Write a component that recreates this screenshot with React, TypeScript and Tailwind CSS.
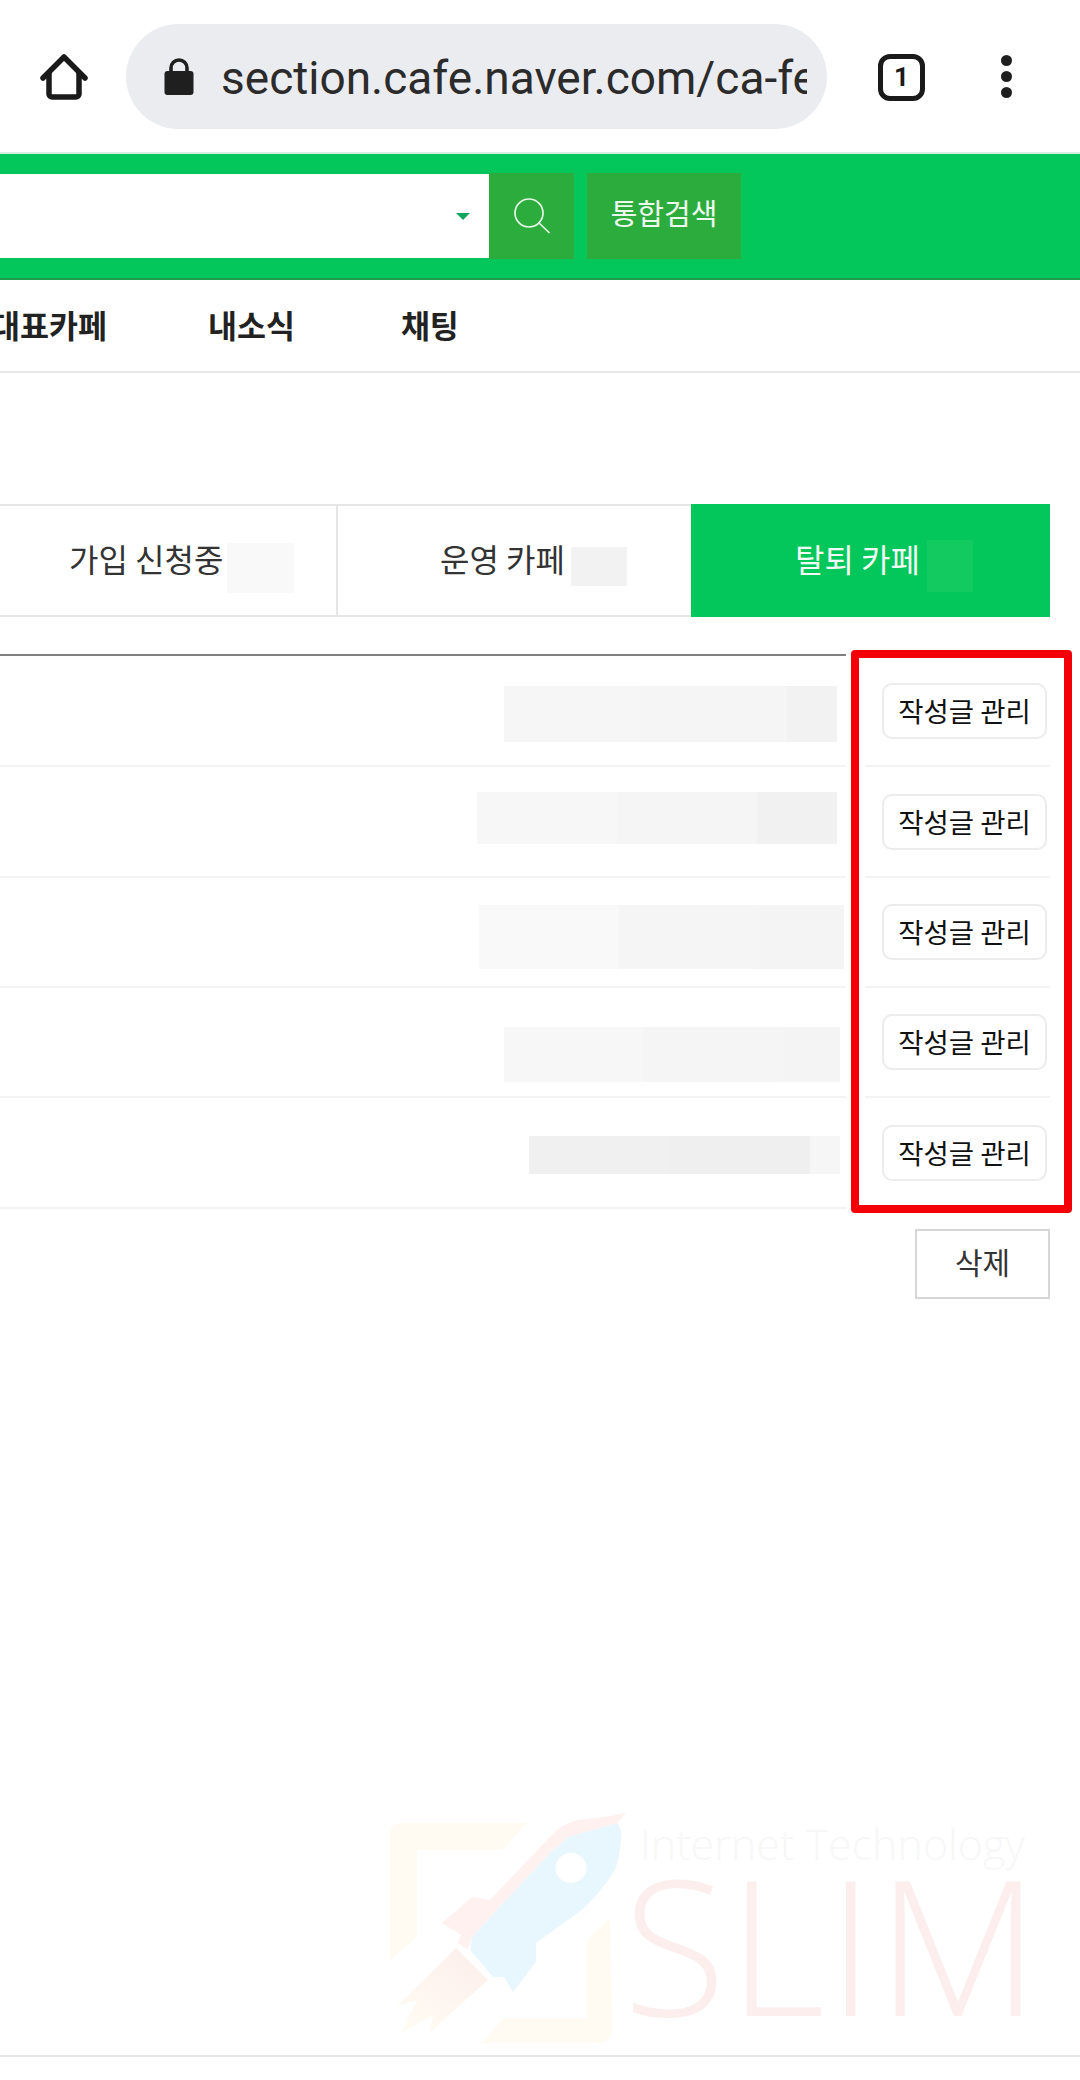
// App.tsx

type Row = {
  h: string
  blur: React.ReactNode
}

const rows: Row[] = [
  {
    h: 'h-[111px]',
    blur: (
      <div className="flex h-[56px] mt-[30px] mr-[9px]">
        <div className="w-[135px] bg-[#f6f6f6]" />
        <div className="w-[148px] bg-[#f5f5f5]" />
        <div className="w-[50px] bg-[#f2f2f2]" />
      </div>
    ),
  },
  {
    h: 'h-[111px]',
    blur: (
      <div className="flex h-[52px] mt-[25px] mr-[9px]">
        <div className="w-[140px] bg-[#f7f7f7]" />
        <div className="w-[140px] bg-[#f5f5f5]" />
        <div className="w-[80px] bg-[#f1f1f1]" />
      </div>
    ),
  },
  {
    h: 'h-[110px]',
    blur: (
      <div className="flex h-[64px] mt-[27px] mr-[2px]">
        <div className="w-[140px] bg-[#f9f9f9]" />
        <div className="w-[140px] bg-[#f5f5f5]" />
        <div className="w-[85px] bg-[#f4f4f4]" />
      </div>
    ),
  },
  {
    h: 'h-[110px]',
    blur: (
      <div className="flex h-[55px] mt-[39px] mr-[6px]">
        <div className="w-[139px] bg-[#f7f7f7]" />
        <div className="w-[140px] bg-[#f5f5f5]" />
        <div className="w-[57px] bg-[#f4f4f4]" />
      </div>
    ),
  },
  {
    h: 'h-[111px]',
    blur: (
      <div className="flex h-[38px] mt-[38px] mr-[6px]">
        <div className="w-[140px] bg-[#f0f0f0]" />
        <div className="w-[141px] bg-[#efefef]" />
        <div className="w-[30px] bg-[#f6f6f6]" />
      </div>
    ),
  },
]

function HomeIcon() {
  return (
    <svg viewBox="0 0 60 60" className="w-[60px] h-[60px] shrink-0" fill="none" stroke="#1a1a1a" strokeWidth={5.5} strokeLinecap="round" strokeLinejoin="round">
      <path d="M10 31 31 10l21 21" />
      <path d="M16 26v21a3 3 0 0 0 3 3h24a3 3 0 0 0 3-3V26" />
    </svg>
  )
}

function LockIcon() {
  return (
    <svg viewBox="0 0 30 38" className="w-[30px] h-[38px] shrink-0">
      <rect x="0.5" y="13" width="29" height="24" rx="3" fill="#1f1f1f" />
      <path d="M7 15V10a8 8 0 0 1 16 0v5" fill="none" stroke="#1f1f1f" strokeWidth="3.6" />
    </svg>
  )
}

function SearchIcon() {
  return (
    <svg viewBox="0 0 36 36" className="w-[36px] h-[36px]" fill="none" stroke="#e6f7e6" strokeWidth={1.7} strokeLinecap="round">
      <circle cx="15" cy="15" r="14" />
      <path d="M25 25l10 9.5" />
    </svg>
  )
}

function RocketLogo() {
  return (
    <svg viewBox="0 0 240 236" className="w-[240px] h-[236px] shrink-0">
      <defs>
        <linearGradient id="flame" x1="0.8" y1="0.1" x2="0.1" y2="0.9">
          <stop offset="0" stopColor="#fdf0ec" />
          <stop offset="1" stopColor="#fffbf3" />
        </linearGradient>
      </defs>
      <path d="M11 10H137L112 37H27V124L0 147V20Q0 10 11 10Z" fill="#fffbf3" />
      <path d="M220 105 197 127V205H114L91 230H206Q222 230 222 215Z" fill="#fffbf3" />
      <path d="M66 135 98 167 39 220 43 202 11 220 27 187 6 194Z" fill="url(#flame)" />
      <path d="M52 110 82 84 100 87 160 24Q172 10 188 7L220 3 236 0 227 10 179 24 160 40 82 124 78 137 68 130 71 122Z" fill="#fef1ef" />
      <path d="M227 10Q233 18 231 27 230 42 225 57 212 78 192 97L146 130V149L123 179 114 164H103L80 137 82 124 160 40 179 24Z" fill="#e8f7fd" />
      <ellipse cx="181" cy="55" rx="15.5" ry="15" fill="#ffffff" />
    </svg>
  )
}

export default function App() {
  return (
    <div className="w-[1080px] h-[2080px] bg-white overflow-hidden font-['Noto_Sans_CJK_KR','Noto_Sans',sans-serif] text-[#222]">
      {/* CHROME TOOLBAR */}
      <div className="h-[154px] pt-[1px] flex items-center border-b-2 border-[#d9ece0]">
        <div className="ml-[33px] mt-[1px]">
          <HomeIcon />
        </div>
        <div className="ml-[33px] w-[701px] h-[105px] rounded-full bg-[#ebecf0] flex items-center pl-[38px] pr-[20px]">
          <LockIcon />
          <div className="ml-[27px] pt-[4px] overflow-hidden whitespace-nowrap font-['Roboto',sans-serif] text-[46px] text-[#2b2b2b]">
            section.cafe.naver.com/ca-fe
          </div>
        </div>
        <div className="ml-[51px] mt-[2px] w-[47px] h-[47px] rounded-[12px] border-[5px] border-[#1a1a1a] flex items-center justify-center font-['Roboto',sans-serif] font-bold text-[26px] text-[#1a1a1a]">
          1
        </div>
        <div className="ml-[76px] flex flex-col gap-[5px]">
          <div className="w-[11px] h-[11px] rounded-full bg-[#1f1f1f]" />
          <div className="w-[11px] h-[11px] rounded-full bg-[#1f1f1f]" />
          <div className="w-[11px] h-[11px] rounded-full bg-[#1f1f1f]" />
        </div>
      </div>

      {/* GREEN SEARCH BAR */}
      <div className="h-[126px] bg-[#03c75a] border-b-2 border-[#1f9d4d] flex items-center">
        <div className="w-[489px] h-[84px] bg-white flex items-center justify-end pr-[19px]">
          <div className="w-0 h-0 border-x-[7px] border-x-transparent border-t-[7px] border-t-[#14a65c]" />
        </div>
        <div className="w-[85px] h-[86px] bg-[#2dac3e] flex items-center justify-center">
          <SearchIcon />
        </div>
        <div className="ml-[13px] w-[154px] h-[86px] pb-[6px] bg-[#2dac3e] flex items-center justify-center text-[#eef9ee] text-[29px]">
          통합검색
        </div>
      </div>

      {/* NAV */}
      <div className="h-[93px] pb-[2px] border-b-2 border-[#e8e8e8] flex items-center font-bold text-[31.5px] text-[#222] whitespace-nowrap">
        <span className="-ml-[9px]">대표카페</span>
        <span className="ml-[101px]">내소식</span>
        <span className="ml-[106px]">채팅</span>
      </div>

      {/* TABS */}
      <div className="mt-[131px] mr-[30px] h-[113px] flex text-[32px] text-[#333] whitespace-nowrap">
        <div className="w-[338px] border-y-2 border-r-2 border-[#e6e6e6] flex items-center">
          <span className="ml-[69px] mb-[5px]">가입 신청중</span>
          <span className="ml-[4px] mt-[14px] w-[67px] h-[50px] bg-[#f9f9f9]" />
        </div>
        <div className="w-[353px] border-y-2 border-[#e6e6e6] flex items-center">
          <span className="ml-[102px] mb-[5px]">운영 카페</span>
          <span className="ml-[6px] mt-[12px] w-[56px] h-[39px] bg-[#f2f2f2]" />
        </div>
        <div className="w-[359px] bg-[#03c75a] flex items-center text-[#f2fbf5]">
          <span className="ml-[104px] mb-[5px]">탈퇴 카페</span>
          <span className="ml-[7px] mt-[11px] w-[46px] h-[52px] bg-[#12ca60]" />
        </div>
      </div>

      {/* TABLE */}
      <div className="relative mt-[37px] mr-[30px]">
        <div className="w-[846px] border-t-2 border-[#808080]" />
        {rows.map((row, i) => (
          <div key={i} className={`${row.h} flex`}>
            <div className="w-[846px] flex items-start justify-end border-b-2 border-[#f3f3f3]">{row.blur}</div>
            <div className="ml-[19px] flex-1 flex items-center justify-end pr-[3px] border-b-2 border-[#f3f3f3]">
              <button className="w-[165px] h-[56px] rounded-[10px] border-2 border-[#ececec] bg-white text-[27.5px] text-[#111] whitespace-nowrap">
                작성글 관리
              </button>
            </div>
          </div>
        ))}
        {/* red highlight */}
        <div className="absolute left-[851px] -top-[4px] w-[221px] h-[563px] border-[8px] border-[#f40009] rounded-[4px]" />
      </div>

      <div className="flex justify-end mr-[30px] mt-[20px]">
        <button className="w-[135px] h-[70px] pb-[5px] border-2 border-[#d6d6d6] bg-white text-[30px] text-[#333]">삭제</button>
      </div>

      {/* WATERMARK */}
      <div className="mt-[514px] ml-[390px] h-[242px] flex">
        <RocketLogo />
        <div className="-ml-[7px] flex flex-col">
          <div className="ml-[17px] mt-[6px] font-['Open_Sans',sans-serif] font-light text-[43px] leading-[50px] text-[#f7f7f7] whitespace-nowrap">
            Internet Technology
          </div>
          <div className="-mt-[1px] font-['Open_Sans',sans-serif] font-light text-[189px] leading-[150px] text-[#fdeeee] whitespace-nowrap tracking-[2px]">
            SLIM
          </div>
        </div>
      </div>

      <div className="border-t-2 border-[#e6e6e6]" />
    </div>
  )
}
